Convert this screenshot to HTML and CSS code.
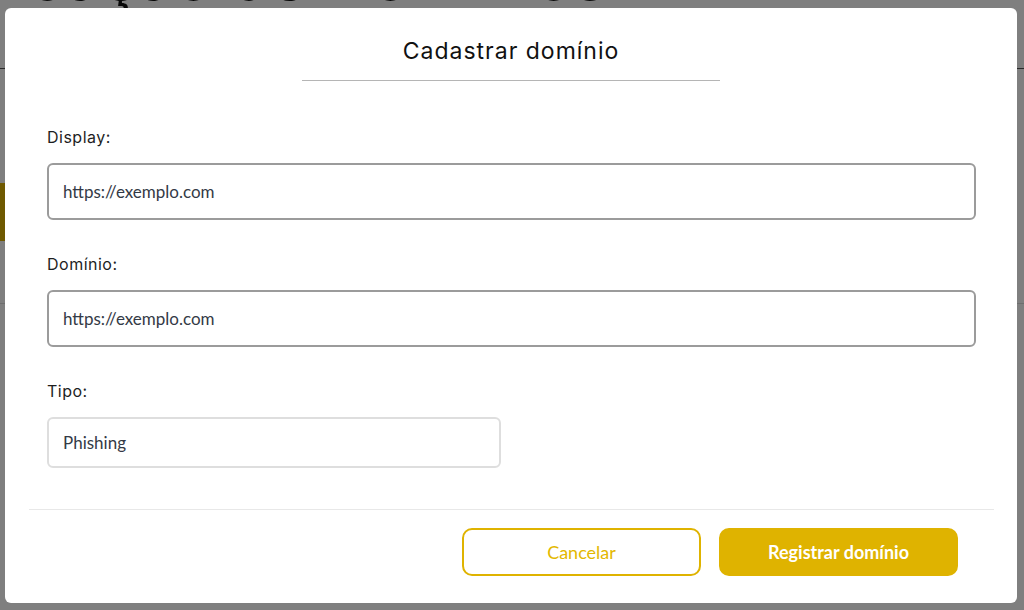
FILE: index.html
```html
<!DOCTYPE html>
<html lang="pt-BR">
<head>
  <meta charset="utf-8">
  <title>Cadastrar domínio</title>
  <link rel="stylesheet" href="styles.css">
</head>
<body>
  <div class="page">
    <header class="page-head">
      <h1>Verificação de Domínios</h1>
    </header>
    <div class="toolbar">
      <button class="page-btn">Novo</button>
    </div>
    <div class="table-line"></div>
  </div>

  <div class="overlay">
    <div class="modal">
      <div class="modal-head">
        <h2>Cadastrar domínio</h2>
      </div>
      <form class="modal-body">
        <label class="field-label">Display:</label>
        <input class="field" type="text" value="https://exemplo.com">

        <label class="field-label">Domínio:</label>
        <input class="field" type="text" value="https://exemplo.com">

        <label class="field-label">Tipo:</label>
        <div class="select">Phishing</div>
      </form>
      <div class="modal-foot">
        <button class="btn btn-outline">Cancelar</button>
        <button class="btn btn-solid">Registrar domínio</button>
      </div>
    </div>
  </div>
</body>
</html>
```

FILE: styles.css
```css
html, body {
margin: 0;
padding: 0;
}
body {
background-color: #fff;
font-family: "Lato", "Liberation Sans", sans-serif;
overflow: hidden;
height: 610px;
}
.page-head {
height: 68px;
border-bottom: 1px solid #555;
overflow: hidden;
}
.page-head h1 {
margin: -62px 0 0 -130px;
font-family: "Inter", sans-serif;
font-weight: 400;
font-size: 64px;
color: #111;
white-space: nowrap;
}
.toolbar {
padding-top: 114px;
}
.page-btn {
width: 140px;
height: 58px;
border: 0;
background-color: #dfb300;
}
.table-line {
margin-top: 62px;
border-top: 1px solid #ddd;
}

.overlay {
position: fixed;
inset: 0;
background-color: rgba(0, 0, 0, 0.5);
padding: 8px 7px 7px 5px;
}
.modal {
background-color: #fff;
border-radius: 6px;
height: 595px;
box-sizing: border-box;
}
.modal-head {
padding-top: 28px;
}
.modal-head h2 {
width: 418px;
margin: 0 auto;
padding-bottom: 14px;
border-bottom: 1px solid #b5b5b5;
text-align: center;
font-family: "Inter", sans-serif;
font-weight: 400;
font-size: 23px;
letter-spacing: 1px;
line-height: 30px;
color: #111;
}
.modal-body {
display: flex;
flex-direction: column;
align-items: flex-start;
padding: 45px 41px 0 42px;
}
.field-label {
font-family: "Inter", sans-serif;
font-size: 16px;
letter-spacing: 0.5px;
line-height: 22px;
color: #1e1e1e;
margin-bottom: 15px;
}
.field {
width: 100%;
height: 57px;
box-sizing: border-box;
border: 2px solid #9b9b9b;
border-radius: 6px;
padding: 0 14px;
font-family: inherit;
font-size: 17px;
color: #343a46;
margin-bottom: 33px;
outline: none;
}
.select {
width: 454px;
height: 51px;
box-sizing: border-box;
border: 2px solid #dedede;
border-radius: 6px;
padding: 0 14px;
display: flex;
align-items: center;
font-size: 17px;
color: #343a46;
}
.modal-foot {
margin: 41px 23px 0 24px;
border-top: 1px solid #e8e8e8;
padding: 18px 36px 0 0;
display: flex;
justify-content: flex-end;
gap: 18px;
}
.btn {
width: 239px;
height: 48px;
border-radius: 10px;
font-family: inherit;
font-size: 18px;
font-weight: 700;
cursor: pointer;
}
.btn-outline {
background-color: #fff;
border: 2px solid #dfb300;
color: #e3b800;
font-weight: 400;
}
.btn-solid {
background-color: #dfb300;
border: 2px solid #dfb300;
color: #fff;
}
```
